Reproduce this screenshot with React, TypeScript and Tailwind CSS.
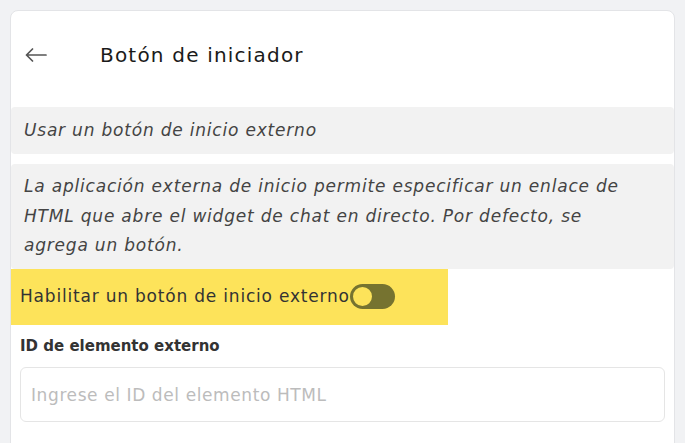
export default function App() {
  return (
    <div
      className="w-[685px] h-[443px] overflow-hidden bg-[#f1f2f4] pt-[10px] pl-[10px] pr-[10px]"
      style={{ fontFamily: '"DejaVu Sans", "Noto Sans", sans-serif' }}
    >
      <div className="h-[460px] rounded-lg border border-[#e3e4e7] bg-white">
        {/* Encabezado */}
        <div className="flex h-[96px] items-center pb-[8px] pl-[14px]">
          <svg width="22" height="14" viewBox="0 0 22 14" fill="none" className="text-[#555]">
            <path d="M21 7H1.5M7.5 1L1.5 7l6 6" stroke="currentColor" strokeWidth="1.7" strokeLinecap="round" strokeLinejoin="round" />
          </svg>
          <h1 className="ml-[53px] text-[20px] tracking-[1.2px] text-[#1a1a1a]">Botón de iniciador</h1>
        </div>

        <div className="flex h-[47px] items-center rounded-sm bg-[#f2f2f2] px-[13px]">
          <p className="text-[17px] italic tracking-[0.8px] text-[#444]">Usar un botón de inicio externo</p>
        </div>

        <div className="mt-[10px] rounded-sm bg-[#f2f2f2] px-[13px] pt-[8px] pb-[8px]">
          <p className="pr-[15px] text-[17px] italic leading-[29.5px] tracking-[0.8px] text-[#444]">
            La aplicación externa de inicio permite especificar un enlace de HTML que abre el
            widget de chat en directo. Por defecto, se agrega un botón.
          </p>
        </div>

        <div className="flex h-[56px] w-[437px] items-center bg-[#fde35a] pl-[9px]">
          <span className="text-[17px] tracking-[0.8px] text-[#333]">Habilitar un botón de inicio externo</span>
          <span className="flex h-[25px] w-[45px] items-center rounded-full bg-[#767330] p-[1px]">
            <span className="h-[23px] w-[23px] rounded-full border-2 border-[#767330] bg-[#fde35a]" />
          </span>
        </div>

        <div className="px-[9px] pt-[10px]">
          <label className="block text-[15px] font-semibold text-[#333]">ID de elemento externo</label>
          <input
            type="text"
            placeholder="Ingrese el ID del elemento HTML"
            className="mt-[10px] h-[55px] w-full rounded-md border border-[#e5e5e5] px-[10px] text-[17px] tracking-[0.6px] text-[#333] placeholder:text-[#bcbcbc] focus:outline-none"
          />
        </div>
      </div>
    </div>
  );
}
